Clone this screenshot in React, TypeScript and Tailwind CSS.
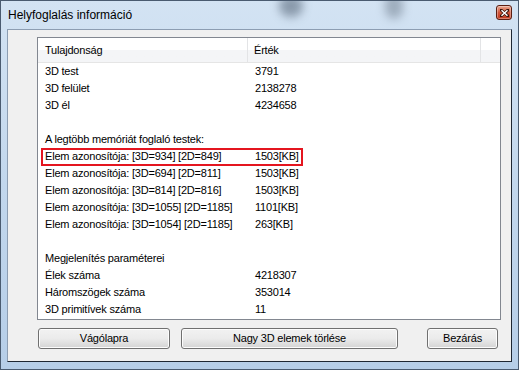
import React from "react";

const rows: { a: string; b: string; sel?: boolean }[] = [
  { a: "3D test", b: "3791" },
  { a: "3D felület", b: "2138278" },
  { a: "3D él", b: "4234658" },
  { a: "", b: "" },
  { a: "A legtöbb memóriát foglaló testek:", b: "" },
  { a: "Elem azonosítója: [3D=934] [2D=849]", b: "1503[KB]", sel: true },
  { a: "Elem azonosítója: [3D=694] [2D=811]", b: "1503[KB]" },
  { a: "Elem azonosítója: [3D=814] [2D=816]", b: "1503[KB]" },
  { a: "Elem azonosítója: [3D=1055] [2D=1185]", b: "1101[KB]" },
  { a: "Elem azonosítója: [3D=1054] [2D=1185]", b: "263[KB]" },
  { a: "", b: "" },
  { a: "Megjelenítés paraméterei", b: "" },
  { a: "Élek száma", b: "4218307" },
  { a: "Háromszögek száma", b: "353014" },
  { a: "3D primitívek száma", b: "11" },
];

function Btn({ w, children }: { w: string; children: React.ReactNode }) {
  return (
    <div
      className={`${w} h-[21px] rounded-[3px] border border-[#707070] bg-gradient-to-b from-[#f2f2f2] via-[#ebebeb] to-[#d4d4d4] flex items-center justify-center text-[11px] tracking-[-0.2px] text-black shadow-[inset_0_0_0_1px_#fcfcfc]`}
    >
      {children}
    </div>
  );
}

export default function App() {
  return (
    <div
      className="relative w-[519px] h-[370px] border border-[#4a5b70] bg-gradient-to-b from-[#d3e3f3] via-[#c2d7ed] to-[#b6cee8] overflow-hidden flex flex-col"
      style={{ fontFamily: '"Liberation Sans", Arial, sans-serif' }}
    >
      {/* glass blur spots */}
      <div className="absolute left-[278px] top-[-6px] w-[24px] h-[22px] rounded-full bg-[#5a6a7c] opacity-60 blur-[5px]" />
      <div className="absolute left-[384px] top-[-8px] w-[18px] h-[26px] rounded-full bg-[#6a7888] opacity-50 blur-[5px]" />

      {/* title bar */}
      <div className="relative h-[28px] flex items-center pl-[7px] shrink-0">
        <span className="text-[12px] text-black">Helyfoglalás információ</span>
        <div className="absolute left-[495px] top-[4px] w-[16px] h-[15px] rounded-[3px] border border-[#5b1e12] bg-gradient-to-b from-[#e9a892] via-[#d0553a] to-[#c23a1e] flex items-center justify-center shadow-[inset_0_0_0_1px_rgba(255,255,255,0.35)]">
          <svg width="9" height="8" viewBox="0 0 9 8">
            <path d="M1 1 L8 7 M8 1 L1 7" stroke="#3a1208" strokeWidth="3" strokeLinecap="square" />
            <path d="M1.5 1.3 L7.5 6.7 M7.5 1.3 L1.5 6.7" stroke="#ffffff" strokeWidth="1.5" />
          </svg>
        </div>
      </div>

      {/* client */}
      <div className="mx-[6px] mb-[7px] flex-1 border border-t-[#8c9db2] border-l-[#8c9db2] border-r-[#1e2733] border-b-[#1e2733] bg-[#f0f0f0] flex flex-col">
        {/* list box */}
        <div className="ml-[29px] mt-[7px] w-[464px] h-[283px] border border-[#828790] bg-white flex flex-col">
          <div className="h-[25px] shrink-0 flex border-b border-[#e5e5e5] bg-gradient-to-b from-white from-50% to-[#f4f5f7] to-50% text-[11px] tracking-[-0.2px] text-black">
            <div className="w-[210px] pl-[7px] flex items-center border-r border-[#e3e4e6]">Tulajdonság</div>
            <div className="w-[233px] pl-[6px] flex items-center border-r border-[#e3e4e6]">Érték</div>
            <div className="flex-1" />
          </div>
          <div className="flex flex-col text-[11px] tracking-[-0.2px] text-black">
            {rows.map((r, i) => (
              <div key={i} className="relative h-[17px] flex items-center">
                <div className="w-[211px] pl-[7px] whitespace-nowrap">{r.a}</div>
                <div className="pl-[6px] whitespace-nowrap">{r.b}</div>
                {r.sel && (
                  <div className="absolute left-[3px] top-0 w-[262px] h-[18px] border-2 border-[#e4151f]" />
                )}
              </div>
            ))}
          </div>
        </div>

        {/* buttons */}
        <div className="ml-[30px] mt-[8px] flex">
          <Btn w="w-[132px]">Vágólapra</Btn>
          <div className="ml-[11px]">
            <Btn w="w-[217px]">Nagy 3D elemek törlése</Btn>
          </div>
          <div className="ml-[29px]">
            <Btn w="w-[71px]">Bezárás</Btn>
          </div>
        </div>
      </div>
    </div>
  );
}
